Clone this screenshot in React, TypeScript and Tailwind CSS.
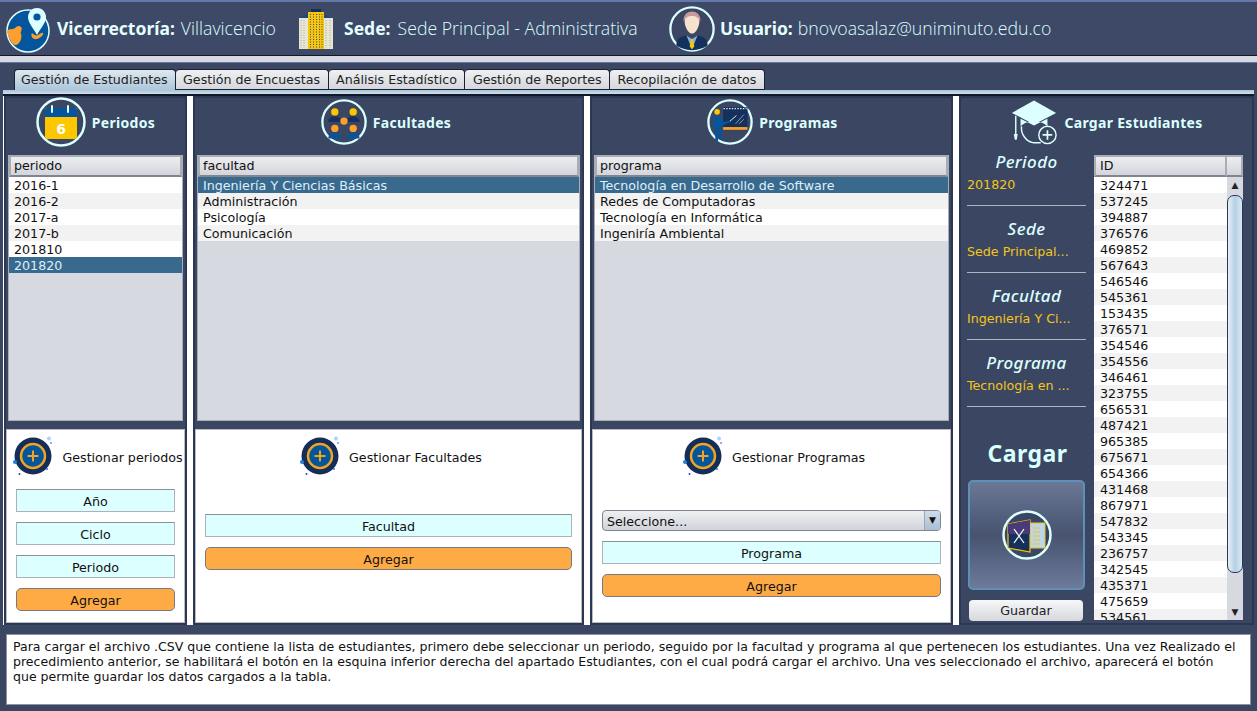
const periodos = ['2016-1', '2016-2', '2017-a', '2017-b', '201810', '201820']
const facultades = ['Ingeniería Y Ciencias Básicas', 'Administración', 'Psicología', 'Comunicación']
const programas = ['Tecnología en Desarrollo de Software', 'Redes de Computadoras', 'Tecnología en Informática', 'Ingeniría Ambiental']
const ids = [
  '324471', '537245', '394887', '376576', '469852', '567643', '546546', '545361', '153435', '376571',
  '354546', '354556', '346461', '323755', '656531', '487421', '965385', '675671', '654366', '431468',
  '867971', '547832', '543345', '236757', '342545', '435371', '475659', '534561',
]
const tabs = ['Gestión de Encuestas', 'Análisis Estadístico', 'Gestión de Reportes', 'Recopilación de datos']

function Ring({ size, children }: { size: number; children: React.ReactNode }) {
  return (
    <svg width={size} height={size} viewBox="0 0 50 50" className="shrink-0">
      <circle cx="25" cy="25" r="23.5" fill="#3b4762" stroke="#dcffff" strokeWidth="2.5" />
      {children}
    </svg>
  )
}

function GlobeIcon() {
  return (
    <svg width="46" height="48" viewBox="0 0 46 48" className="shrink-0">
      <circle cx="23" cy="26" r="21" fill="#04559c" stroke="#dcffff" strokeWidth="1.5" />
      <path d="M2 26c3-3 6-1 8-3s4-3 6-1-1 5 0 7 0 7-2 9-4 3-6 1-5-7-6-13z" fill="#fc9f2e" />
      <path d="M27 28c2 2 4 3 6 2s4-3 5-2-2 5-6 6-7-3-5-6z" fill="#fc9f2e" />
      <path d="M32 3c6 0 9 5 9 9 0 6-6 12-9 18-3-6-9-12-9-18 0-4 3-9 9-9z" fill="#dcffff" />
      <circle cx="32" cy="12" r="3.6" fill="#04559c" />
    </svg>
  )
}

function BuildingIcon() {
  return (
    <svg width="36" height="42" viewBox="0 0 36 42" className="shrink-0">
      <rect x="1" y="10" width="9" height="31" fill="#e8e6cf" />
      <rect x="26" y="10" width="9" height="31" fill="#e8e6cf" />
      <path d="M1 10l9-5v5zM35 10l-9-3v3z" fill="#1b4a82" />
      <rect x="10" y="4" width="16" height="37" fill="#f5c50f" />
      <rect x="13" y="1" width="10" height="3" fill="#16305c" />
      <path d="M12.5 6v34M15.5 6v34M18.5 6v34M21.5 6v34M24 6v34" stroke="#16305c" strokeWidth=".8" strokeDasharray="1 1.5" />
      <path d="M3 12v28M6 12v28M28 12v28M32 12v28" stroke="#7fa2c4" strokeWidth=".8" strokeDasharray="1 1.5" />
    </svg>
  )
}

function UserIcon() {
  return (
    <Ring size={46}>
      <path d="M8 43c0-7 4-10 11-11l6 4 6-4c7 1 11 4 11 11-5 3-10 5-17 5s-12-2-17-5z" fill="#16305c" />
      <path d="M19 32l6 15 6-15-6 4z" fill="#7fb0e0" />
      <path d="M24 36h2l1.500 8-2.500 3-2.500-3z" fill="#f5c50f" />
      <path d="M17 17c0-5 3-9 8-9s8 4 8 9-4 13-8 13-8-8-8-13z" fill="#f5e3cf" />
      <path d="M16 17c-1-6 3-11 9-11s10 5 9 11c-2-4-4-6-9-6s-7 2-9 6z" fill="#c79a9e" />
    </Ring>
  )
}

function CalendarIcon() {
  return (
    <Ring size={50}>
      <rect x="9" y="11" width="32" height="31" rx="2" fill="#fdc700" />
      <path d="M9 20v-7a2 2 0 012-2h28a2 2 0 012 2v7z" fill="#04559c" />
      <path d="M16 9v6M32 9v6" stroke="#dcffff" strokeWidth="2" strokeLinecap="round" />
      <text x="25" y="37" textAnchor="middle" fontSize="14" fontWeight="700" fill="#fff" fontFamily="DejaVu Sans">6</text>
    </Ring>
  )
}

function PeopleIcon() {
  return (
    <Ring size={46}>
      <circle cx="15" cy="14" r="4" fill="#fdc700" />
      <circle cx="35" cy="14" r="4" fill="#fdc700" />
      <path d="M8 25c0-4 3-6 7-6s7 2 7 6zM28 25c0-4 3-6 7-6s7 2 7 6z" fill="#16305c" />
      <circle cx="25" cy="24" r="4" fill="#fc9f2e" />
      <circle cx="15" cy="32" r="4" fill="#fc9f2e" />
      <circle cx="35" cy="32" r="4" fill="#fc9f2e" />
      <path d="M8 43c0-4 3-6 7-6s7 2 7 6zM28 43c0-4 3-6 7-6s7 2 7 6z" fill="#04559c" />
    </Ring>
  )
}

function TeacherIcon() {
  return (
    <Ring size={46}>
      <rect x="17.500" y="9" width="26.500" height="24" fill="#16305c" />
      <path d="M18 10.500h25" stroke="#dcffff" strokeWidth="1.500" strokeDasharray="1.500 1.500" />
      <rect x="17.500" y="30.500" width="26.500" height="3" fill="#fc9f2e" />
      <path d="M31 27l9-10M35 27l5-5" stroke="#7fa2c4" strokeWidth="1" />
      <circle cx="11" cy="14" r="3" fill="#fdc700" />
      <path d="M7 19h8l3 6 8-2v2l-10 4v15h-3V33h-1v13H9V32H7z" fill="#04559c" />
      <path d="M25 24l7-6" stroke="#dcffff" strokeWidth="1" />
    </Ring>
  )
}

function GradIcon() {
  return (
    <svg width="48" height="47" viewBox="0 0 50 48" className="shrink-0">
      <path d="M25 1l23 13-23 12L2 14z" fill="#dcffff" />
      <path d="M11 20v8c4-4 9-5 14-5s10 1 14 5v-8l-14 7z" fill="#dcffff" />
      <path d="M6 17v19" stroke="#dcffff" strokeWidth="1.500" />
      <path d="M4 36h4l-1 6H5z" fill="#dcffff" />
      <path d="M12 28c-1 8 5 16 12 17h8M38 28c1 2 1 4 1 5" fill="none" stroke="#dcffff" strokeWidth="1.500" />
      <circle cx="39" cy="37" r="9" fill="#3b4762" stroke="#dcffff" strokeWidth="1.500" />
      <path d="M39 32v10M34 37h10" stroke="#dcffff" strokeWidth="1.800" />
    </svg>
  )
}

function PlusIcon() {
  return (
    <svg width="42" height="42" viewBox="0 0 42 42" className="shrink-0">
      <circle cx="21" cy="21" r="18.500" fill="#142e59" />
      <circle cx="21" cy="21" r="12" fill="#04559c" stroke="#f0a41f" strokeWidth="2.500" />
      <path d="M21 15.500v11M15.500 21h11" stroke="#f0a41f" strokeWidth="2" />
      <circle cx="37" cy="3.500" r="2" fill="#a9d4fb" />
      <circle cx="3" cy="27" r="2" fill="#1e7fe0" />
      <circle cx="7.500" cy="39" r="1" fill="#2a3fc0" />
      <circle cx="35" cy="34" r="1" fill="#2f80e0" />
      <circle cx="39" cy="8" r=".8" fill="#2a3fc0" />
    </svg>
  )
}

function ExcelIcon() {
  return (
    <Ring size={50}>
      <rect x="26" y="13" width="17" height="25" fill="#bcd6ee" stroke="#f0c419" strokeWidth="1" />
      <path d="M31 18h7M31 22h7M31 26h7M31 30h7M31 34h7" stroke="#f5c50f" strokeWidth="1.200" />
      <path d="M6 14l22-4v32L6 38z" fill="#16305c" stroke="#f5c50f" strokeWidth="1.200" />
      <path d="M6 14l22-4v14H6z" fill="#4a3a78" />
      <path d="M12 19l10 14M22 19L12 33" stroke="#fff" strokeWidth="1.200" />
    </Ring>
  )
}

function TableHeader({ label }: { label: React.ReactNode }) {
  return (
    <div className="h-[22px] shrink-0 pl-[3px] text-[12.67px] leading-[17px] text-[#111] border-2 border-[#a8acb4] border-b-[#7f8591] bg-gradient-to-b from-[#eceef0] to-[#d3d5db]">
      {label}
    </div>
  )
}

function ListPanel({ label, rows, selected }: { label: string; rows: string[]; selected: number }) {
  return (
    <div className="mx-[2px] h-[267px] flex flex-col border-x border-b border-[#a8acb4] bg-[#d6d9e0]">
      <TableHeader label={label} />
      {rows.map((row, i) => (
        <div
          key={row}
          className={
            i === selected
              ? 'h-4 pl-[5px] text-[12.67px] leading-[18px] bg-[#39698c] text-[#dcf0ff]'
              : i % 2 === 0
                ? 'h-4 pl-[5px] text-[12.67px] leading-[18px] bg-white text-[#111]'
                : 'h-4 pl-[5px] text-[12.67px] leading-[18px] bg-[#f2f2f2] text-[#111]'
          }
        >
          {row}
        </div>
      ))}
    </div>
  )
}

function Title({ icon, label, className = '' }: { icon: React.ReactNode; label: string; className?: string }) {
  return (
    <div className={`h-[57px] shrink-0 pb-[9px] flex items-center justify-center gap-[6px] ${className}`}>
      {icon}
      <span className="font-['Noto_Sans'] font-bold text-[14px] tracking-[.3px] text-[#dcffff]">{label}</span>
    </div>
  )
}

function Manage({ label }: { label: string }) {
  return (
    <div className="flex items-center justify-center gap-[8px] pl-[4px] text-[12.67px] text-[#111] whitespace-nowrap">
      <PlusIcon />
      <span className="mt-[2px]">{label}</span>
    </div>
  )
}

function Field({ label }: { label: string }) {
  return (
    <div className="h-[23px] shrink-0 text-center text-[12.67px] leading-[23px] text-[#111] bg-[#dcffff] border border-[#aeb2b8] border-t-[#8a8f98]">
      {label}
    </div>
  )
}

function AddButton() {
  return (
    <div className="h-[23px] shrink-0 text-center text-[12.67px] leading-[23px] text-[#111] bg-[#ffab45] border border-[#77797f] rounded-[5px]">
      Agregar
    </div>
  )
}

function Info({ label, value }: { label: string; value: string }) {
  return (
    <div className="h-[67px] shrink-0 flex flex-col ml-[6px] mr-[8px]">
      <div className="h-[14px] text-center text-[17px] leading-[16px] tracking-[.4px] italic font-medium font-['Noto_Sans'] text-[#dcffff]">{label}</div>
      <div className="mt-[7px] h-[20px] text-[12.67px] leading-[20px] text-[#f5c518] whitespace-nowrap">{value}</div>
      <div className="mt-[10px] h-px bg-[#aeb4c0]" />
    </div>
  )
}

function HeaderItem({ icon, label, value, className }: { icon: React.ReactNode; label: string; value: string; className: string }) {
  return (
    <div className={`flex items-center ${className}`}>
      {icon}
      <span className="font-['Noto_Sans'] font-bold text-[17.5px] text-[#e4ffff] whitespace-nowrap">{label}</span>
      <span className="font-['Open_Sans'] font-light text-[17.7px] text-[#dcffff] whitespace-nowrap">{value}</span>
    </div>
  )
}

export default function App() {
  return (
    <div className="w-[1257px] h-[711px] overflow-hidden flex flex-col bg-[#2f3b57] font-['DejaVu_Sans',sans-serif]">
      <div className="h-[56px] shrink-0 flex items-center pl-[5px] bg-[#3d4966] border-t-2 border-t-[#6378a8] border-b border-b-[#10182a]">
        <HeaderItem icon={<GlobeIcon />} label="Vicerrectoría:" value="Villavicencio" className="w-[293px] gap-[6px]" />
        <HeaderItem icon={<div className="mr-[3px]"><BuildingIcon /></div>} label="Sede:" value="Sede Principal - Administrativa" className="w-[371px] gap-[7px]" />
        <HeaderItem icon={<UserIcon />} label="Usuario:" value="bnovoasalaz@uniminuto.edu.co" className="w-[440px] gap-[5px]" />
      </div>
      <div className="h-[6px] shrink-0 bg-[#d6d9e0]" />

      <div className="flex-1 flex flex-col bg-[#3b4762] border-t border-t-[#6378a8]">
        <div className="h-[22px] mt-[5px] shrink-0 flex items-end pl-[14px]">
          <div className="h-[21px] pl-[6px] pr-[7px] text-[12.67px] leading-[19px] text-[#222] rounded-t-[4px] bg-gradient-to-b from-[#dfe8ef] to-[#adc6da] border border-b-0 border-[#1a2133]">
            Gestión de Estudiantes
          </div>
          {tabs.map((t) => (
            <div key={t} className="h-[21px] px-[7.5px] text-[12.67px] leading-[19px] text-[#222] rounded-t-[4px] bg-gradient-to-b from-[#eff0f2] to-[#d5d7dc] border-r border-t border-b border-[#1a2133]">
              {t}
            </div>
          ))}
        </div>
        <div className="h-[4px] shrink-0 mx-[3px] bg-gradient-to-b from-[#a9c4da] to-[#cfdfec]" />

        <div className="mx-[3px] border-t-2 border-t-[#10182a] h-[531px] shrink-0 pl-[1px] flex gap-[6px] bg-white">
          <div className="w-[183px] shrink-0 flex flex-col bg-[#3b4762] border-2 border-[#2c3853]">
            <Title icon={<CalendarIcon />} label="Periodos" />
            <ListPanel label="periodo" rows={periodos} selected={5} />
            <div className="h-[194px] mt-[8px] flex flex-col px-[9px] bg-white border border-[#b8bbc2] gap-[10px]">
              <div className="h-[44px] mt-[5px] shrink-0 -mx-[9px]">
                <Manage label="Gestionar periodos" />
              </div>
              <Field label="Año" />
              <Field label="Ciclo" />
              <Field label="Periodo" />
              <AddButton />
            </div>
          </div>

          <div className="w-[391px] shrink-0 flex flex-col bg-[#3b4762] border-2 border-[#2c3853]">
            <Title icon={<PeopleIcon />} label="Facultades" className="pr-[5px]" />
            <ListPanel label="facultad" rows={facultades} selected={0} />
            <div className="h-[194px] mt-[8px] flex flex-col px-[9px] bg-white border border-[#b8bbc2]">
              <div className="h-[79px] mt-[5px] shrink-0">
                <Manage label="Gestionar Facultades" />
              </div>
              <Field label="Facultad" />
              <div className="h-[10px] shrink-0" />
              <AddButton />
            </div>
          </div>

          <div className="w-[363px] shrink-0 flex flex-col bg-[#3b4762] border-2 border-[#2c3853]">
            <Title icon={<TeacherIcon />} label="Programas" className="pl-[2px]" />
            <ListPanel label="programa" rows={programas} selected={0} />
            <div className="h-[194px] mt-[8px] flex flex-col px-[9px] bg-white border border-[#b8bbc2]">
              <div className="h-[75px] mt-[5px] shrink-0">
                <Manage label="Gestionar Programas" />
              </div>
              <div className="h-[21px] shrink-0 flex items-center pl-[4px] pt-[2px] text-[12.67px] text-[#111] rounded-[4px] border border-[#7f8591] bg-gradient-to-b from-[#eef0f2] to-[#d0d3da] relative overflow-hidden">
                Seleccione...
                <div className="absolute right-0 top-0 bottom-0 w-[16px] flex items-center justify-center text-[9px] border-l border-[#9aa5b5] bg-gradient-to-b from-[#d0dde9] to-[#a9bfd4]">▼</div>
              </div>
              <div className="h-[10px] shrink-0" />
              <Field label="Programa" />
              <div className="h-[10px] shrink-0" />
              <AddButton />
            </div>
          </div>

          <div className="w-[295px] shrink-0 flex flex-col bg-[#3b4762] border-2 border-[#2c3853]">
            <Title icon={<GradIcon />} label="Cargar Estudiantes" />
            <div className="flex">
              <div className="w-[133px] shrink-0 flex flex-col -mt-px">
                <Info label="Periodo" value="201820" />
                <Info label="Sede" value="Sede Principal..." />
                <Info label="Facultad" value="Ingeniería Y Ci..." />
                <Info label="Programa" value="Tecnología en ..." />
                <div className="mt-[15px] text-center font-['Noto_Sans'] font-bold text-[23px] leading-[32px] tracking-[.5px] text-[#dcffff]">Cargar</div>
                <div className="mt-[11px] ml-[7px] w-[117px] h-[110px] flex items-center justify-center rounded-[5px] border-2 border-[#5f8fb8] bg-gradient-to-b from-[#6a7896] via-[#47536f] to-[#6d7b9b]">
                  <ExcelIcon />
                </div>
                <div className="mt-[10px] ml-[8px] w-[114px] h-[21px] text-center text-[12.67px] leading-[21px] text-[#222] rounded-[4px] bg-gradient-to-b from-[#f6f7f8] to-[#d6d8dd]">Guardar</div>
              </div>
              <div className="w-[149px] h-[465px] flex flex-col overflow-hidden">
                <div className="flex shrink-0">
                  <div className="flex-1"><TableHeader label={<span className="ml-px">ID</span>} /></div>
                  <div className="w-[16px] h-[22px] border-2 border-l-0 border-[#a8acb4] border-b-[#7f8591] bg-gradient-to-b from-[#eceef0] to-[#d3d5db]" />
                </div>
                <div className="flex-1 flex overflow-hidden">
                  <div className="flex-1 overflow-hidden">
                    {ids.map((id, i) => (
                      <div key={id} className={i % 2 === 0 ? 'h-4 pl-[6px] text-[12.67px] leading-[18px] text-[#111] bg-white' : 'h-4 pl-[6px] text-[12.67px] leading-[18px] text-[#111] bg-[#f2f2f2]'}>
                        {id}
                      </div>
                    ))}
                  </div>
                  <div className="w-[16px] shrink-0 flex flex-col items-center bg-[#d6d9e0]">
                    <div className="h-[16px] text-[9px] leading-[16px] text-[#222]">▲</div>
                    <div className="w-[16px] h-[378px] mt-[2px] rounded-[7px] border border-[#2c3853] bg-gradient-to-r from-[#e8f0f6] via-[#b5cfe4] to-[#dce8f2]" />
                    <div className="flex-1" />
                    <div className="h-[16px] text-[9px] leading-[16px] text-[#222]">▼</div>
                  </div>
                </div>
              </div>
            </div>
          </div>
        </div>

        <div className="mx-[6px] mt-[9px] h-[71px] shrink-0 px-[6px] pt-[4px] bg-white border border-[#8d929c] text-[12.55px] leading-[15px] text-[#111] whitespace-nowrap">
          Para cargar el archivo .CSV que contiene la lista de estudiantes, primero debe seleccionar un periodo, seguido por la facultad y programa al que pertenecen los estudiantes. Una vez Realizado el
          <br />
          precedimiento anterior, se habilitará el botón en la esquina inferior derecha del apartado Estudiantes, con el cual podrá cargar el archivo. Una ves seleccionado el archivo, aparecerá el botón
          <br />
          que permite guardar los datos cargados a la tabla.
        </div>
      </div>
    </div>
  )
}
